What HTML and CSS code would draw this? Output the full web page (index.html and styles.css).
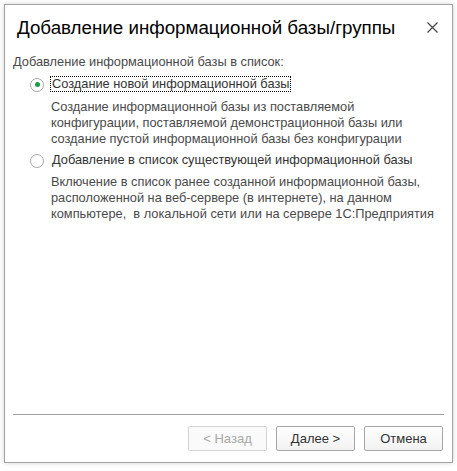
FILE: index.html
```html
<!DOCTYPE html>
<html lang="ru">
<head>
<meta charset="utf-8">
<link rel="stylesheet" href="styles.css">
</head>
<body>
<div class="window">
  <div class="header">
    <div class="title">Добавление информационной базы/группы</div>
    <div class="close">
      <svg width="11" height="11" viewBox="0 0 11 11"><path d="M0.5 0.5 L10.5 10.5 M10.5 0.5 L0.5 10.5" stroke="#444" stroke-width="1.2" fill="none"/></svg>
    </div>
  </div>
  <div class="content">
    <div class="group-label">Добавление информационной базы в список:</div>
    <div class="option first">
      <div class="radio-row">
        <span class="radio checked"><span class="dot"></span></span>
        <span class="radio-text focused">Создание новой информационной базы</span>
      </div>
      <div class="desc">Создание информационной базы из поставляемой<br>конфигурации, поставляемой демонстрационной базы или<br>создание пустой информационной базы без конфигурации</div>
    </div>
    <div class="option second">
      <div class="radio-row">
        <span class="radio"></span>
        <span class="radio-text">Добавление в список существующей информационной базы</span>
      </div>
      <div class="desc">Включение в список ранее созданной информационной базы,<br>расположенной на веб-сервере (в интернете), на данном<br>компьютере,&nbsp; в локальной сети или на сервере 1С:Предприятия</div>
    </div>
  </div>
  <div class="footer">
    <div class="separator"></div>
    <div class="buttons">
      <div class="btn disabled">&lt; Назад</div>
      <div class="btn">Далее &gt;</div>
      <div class="btn">Отмена</div>
    </div>
  </div>
</div>
</body>
</html>
```
FILE: styles.css
```css
html, body {
  margin: 0;
  padding: 0;
  background: #ffffff;
}
body {
  width: 457px;
  height: 471px;
  font-family: "Liberation Sans", Arial, sans-serif;
  overflow: hidden;
}
.window {
  box-sizing: border-box;
  margin: 4px 0 0 4px;
  width: 449px;
  height: 459px;
  border: 1px solid #a3a3a3;
  background: #fff;
  box-shadow: 0 0 5px rgba(0,0,0,0.18);
  display: flex;
  flex-direction: column;
}
.header {
  height: 44px;
  display: flex;
  align-items: center;
  justify-content: space-between;
  padding: 0 14px 0 12px;
}
.title {
  font-size: 18.75px;
  color: #000;
  padding-top: 1px;
}
.close {
  width: 11px;
  height: 11px;
  display: flex;
  margin-top: 1px;
}
.content {
  flex: 1;
  padding: 5px 8px 0 8px;
  font-size: 12.8px;
  color: #4a4a4a;
}
.group-label {
  line-height: 16px;
  margin-bottom: 6px;
}
.option {
  padding-left: 17px;
}
.option.first {
  margin-bottom: 5px;
}
.radio-row {
  display: flex;
  align-items: center;
  height: 16px;
}
.radio {
  box-sizing: border-box;
  width: 14px;
  height: 14px;
  border: 1px solid #a8a8a8;
  border-radius: 50%;
  display: flex;
  align-items: center;
  justify-content: center;
  margin: 1px 6px 0 0;
  background: #fff;
}
.dot {
  width: 5px;
  height: 5px;
  border-radius: 50%;
  background: #1a9a4a;
}
.radio-text {
  color: #333;
  padding: 0 1px;
  line-height: 14px;
  border: 1px dotted transparent;
}
.radio-text.focused {
  border-color: #000;
}
.desc {
  padding-left: 21px;
  line-height: 16px;
}
.option.first .desc {
  padding-top: 7px;
}
.option.second .desc {
  padding-top: 6px;
}
.footer {
  padding: 0 8px 11px 8px;
}
.separator {
  height: 1px;
  background: #a0a0a0;
  margin-bottom: 11px;
}
.buttons {
  display: flex;
  justify-content: flex-end;
  gap: 9px;
  padding-right: 1px;
}
.btn {
  box-sizing: border-box;
  width: 79px;
  height: 25px;
  border: 1px solid #a6a6a6;
  border-radius: 2px;
  background: linear-gradient(#ffffff, #f2f2f2);
  display: flex;
  align-items: center;
  justify-content: center;
  font-size: 13px;
  color: #333;
}
.btn.disabled {
  color: #a8a8a8;
  border-color: #d4d4d4;
  background: #fafafa;
}
```
